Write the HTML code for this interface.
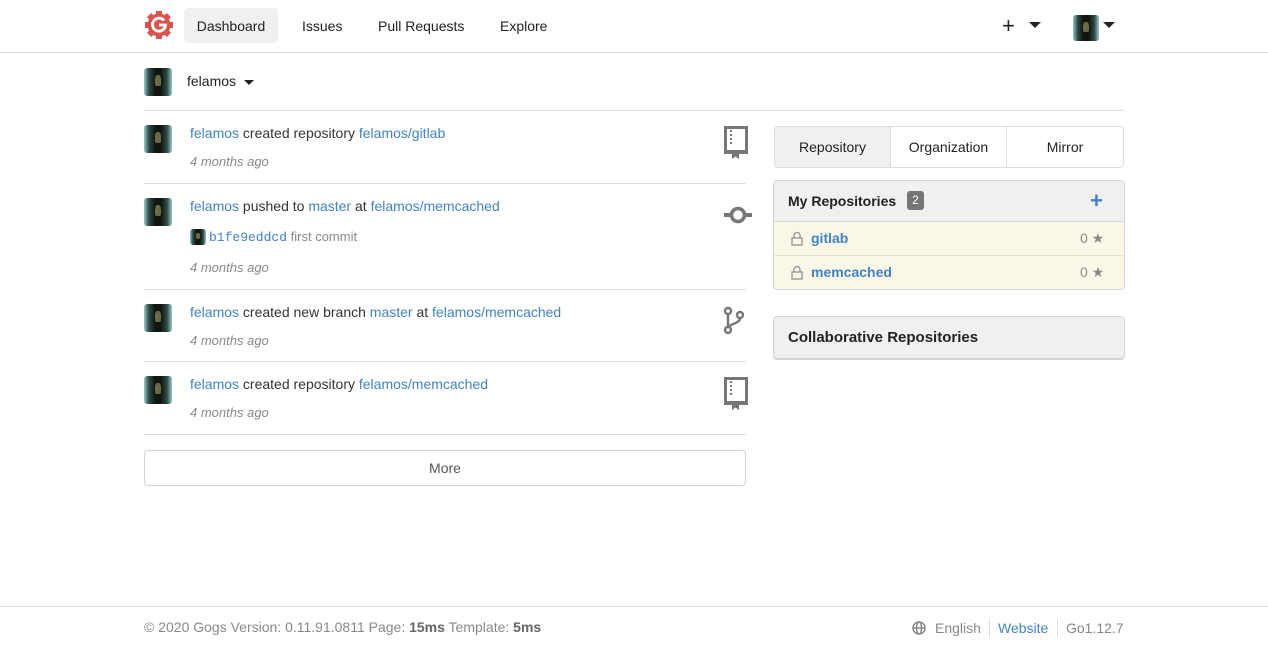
<!DOCTYPE html>
<html><head><meta charset="utf-8"><style>
*{box-sizing:border-box;margin:0;padding:0}
body{width:1268px;height:646px;position:relative;font-family:"Liberation Sans",sans-serif;font-size:14px;color:#333;background:#fff;overflow:hidden}
.a{position:absolute}
a{color:#4183c4;text-decoration:none}
.av{position:absolute;width:28px;height:28px;border-radius:3px;background:linear-gradient(90deg,#9cc8c8 0%,#2e4a46 18%,#10160e 40%,#10160e 60%,#2e4a46 82%,#9cc8c8 100%)}
.av:after{content:"";position:absolute;left:40%;top:25%;width:20%;height:40%;background:#6a6a48;border-radius:40% 40% 2px 2px}
.time{color:#888;font-style:italic;font-size:13px}
.hr{position:absolute;left:144px;width:602px;height:1px;background:#ddd}
.nav{position:absolute;top:9px;height:35px;line-height:35px;font-size:14px;color:#222}
.caret{display:inline-block;width:0;height:0;border-left:5px solid transparent;border-right:5px solid transparent;border-top:5px solid #222;vertical-align:middle}
</style></head><body>
<div class="a" style="left:0;top:52px;width:1268px;height:1px;background:#ddd"></div>
<svg class="a" style="left:144px;top:10px" width="30" height="30" viewBox="0 0 30 30"><g fill="#d9534f"><circle cx="15" cy="15" r="11.5"/><rect x="12" y="1" width="6" height="28"/><rect x="1" y="12" width="28" height="6"/><rect x="12" y="1" width="6" height="28" transform="rotate(45 15 15)"/><rect x="12" y="1" width="6" height="28" transform="rotate(-45 15 15)"/></g><path d="M20 10.5A6.5 6.5 0 1 0 21.5 15H15" fill="none" stroke="#fff" stroke-width="2.8"/></svg>
<div class="nav" style="left:184px;top:8px;width:94px;line-height:37px;background:#f0f0f0;border-radius:4px;text-align:center">Dashboard</div>
<div class="nav" style="left:302px">Issues</div>
<div class="nav" style="left:378px">Pull Requests</div>
<div class="nav" style="left:500px">Explore</div>
<div class="a" style="left:1002px;top:12px;font-size:22px;line-height:28px;color:#222">+</div>
<span class="caret a" style="left:1029px;top:22px;border-width:6px 6px 0 6px"></span>
<div class="av" style="left:1073px;top:15px;width:26px;height:26px"></div>
<span class="caret a" style="left:1103px;top:22px;border-width:6px 6px 0 6px"></span>
<div class="av" style="left:144px;top:68px"></div>
<div class="a" style="left:187px;top:73px;color:#222">felamos <span class="caret" style="margin-left:4px"></span></div>
<div class="hr" style="top:110px;width:980px"></div>

<div class="av" style="left:144px;top:125px"></div>
<div class="a" style="left:190px;top:125px"><a>felamos</a> created repository <a>felamos/gitlab</a></div>
<div class="a time" style="left:190px;top:154px">4 months ago</div>
<svg class="a" style="left:724px;top:126px" width="25" height="33" viewBox="0 0 25 33"><rect x="1.5" y="1.5" width="21" height="25" fill="none" stroke="#767676" stroke-width="3"/><rect x="1" y="24" width="22" height="3" fill="#767676"/><path d="M7 4v15" stroke="#767676" stroke-width="2" stroke-dasharray="2 2"/><path d="M8 26v7l3.5-2.5 3.5 2.5v-7z" fill="#767676"/></svg>
<div class="hr" style="top:183px"></div>

<div class="av" style="left:144px;top:198px"></div>
<div class="a" style="left:190px;top:198px"><a>felamos</a> pushed to <a>master</a> at <a>felamos/memcached</a></div>
<div class="av" style="left:190px;top:229px;width:16px;height:16px"></div>
<div class="a" style="left:209px;top:229px;font-size:13px"><a style="font-family:'Liberation Mono',monospace">b1fe9eddcd</a> <span style="color:#888">first commit</span></div>
<div class="a time" style="left:190px;top:260px">4 months ago</div>
<svg class="a" style="left:723px;top:204px" width="30" height="22" viewBox="0 0 30 22"><path d="M1 11h7M22 11h7" stroke="#767676" stroke-width="4"/><circle cx="15" cy="11" r="6.5" fill="none" stroke="#767676" stroke-width="3.5"/></svg>
<div class="hr" style="top:289px"></div>

<div class="av" style="left:144px;top:304px"></div>
<div class="a" style="left:190px;top:304px"><a>felamos</a> created new branch <a>master</a> at <a>felamos/memcached</a></div>
<div class="a time" style="left:190px;top:333px">4 months ago</div>
<svg class="a" style="left:722px;top:306px" width="24" height="30" viewBox="0 0 24 30"><g fill="none" stroke="#767676" stroke-width="2.4"><circle cx="6" cy="5" r="3"/><circle cx="6" cy="24" r="3"/><circle cx="18" cy="9" r="3"/><path d="M6 8v13M18 12c0 6-10 5-12 10"/></g></svg>
<div class="hr" style="top:361px"></div>

<div class="av" style="left:144px;top:376px"></div>
<div class="a" style="left:190px;top:376px"><a>felamos</a> created repository <a>felamos/memcached</a></div>
<div class="a time" style="left:190px;top:405px">4 months ago</div>
<svg class="a" style="left:724px;top:377px" width="25" height="33" viewBox="0 0 25 33"><rect x="1.5" y="1.5" width="21" height="25" fill="none" stroke="#767676" stroke-width="3"/><rect x="1" y="24" width="22" height="3" fill="#767676"/><path d="M7 4v15" stroke="#767676" stroke-width="2" stroke-dasharray="2 2"/><path d="M8 26v7l3.5-2.5 3.5 2.5v-7z" fill="#767676"/></svg>
<div class="hr" style="top:434px"></div>

<div class="a" style="left:144px;top:450px;width:602px;height:36px;border:1px solid #d4d4d5;border-radius:4px;text-align:center;line-height:34px;color:#555">More</div>

<div class="a" style="left:774px;top:126px;width:350px;height:42px;border:1px solid #ddd;border-radius:4px;display:flex;overflow:hidden">
<div style="width:116px;background:#f0f0f0;text-align:center;line-height:40px;border-right:1px solid #ddd;color:#222">Repository</div>
<div style="width:116px;text-align:center;line-height:40px;border-right:1px solid #ddd;color:#222">Organization</div>
<div style="flex:1;text-align:center;line-height:40px;color:#222">Mirror</div></div>

<div class="a" style="left:773px;top:180px;width:352px;height:110px;border:1px solid #d4d4d5;border-radius:4px;overflow:hidden">
<div style="height:41px;background:#f0f0f0;border-bottom:1px solid #d4d4d5;position:relative">
<span class="a" style="left:14px;top:12px;font-weight:bold;color:#222;font-size:14px">My Repositories</span>
<span class="a" style="left:133px;top:10px;width:17px;height:19px;background:#767676;color:#fff;border-radius:3px;font-size:12px;text-align:center;line-height:19px">2</span>
<span class="a" style="left:316px;top:7px;color:#4183c4;font-size:22px;font-weight:bold">+</span></div>
<div style="height:34px;background:#fbf7e8;border-bottom:1px solid #e6e3d6;position:relative">
<svg class="a" style="left:17px;top:9px" width="12" height="15" viewBox="0 0 12 15"><path d="M3 7V4.5a3 3 0 0 1 6 0V7" fill="none" stroke="#999" stroke-width="1.4"/><rect x="1" y="7" width="10" height="7" fill="none" stroke="#999" stroke-width="1.4"/></svg>
<a class="a" style="left:37px;top:8px;font-weight:bold">gitlab</a>
<span class="a" style="left:306px;top:8px;color:#888">0 ★</span></div>
<div style="height:34px;background:#fbf7e8;position:relative">
<svg class="a" style="left:17px;top:9px" width="12" height="15" viewBox="0 0 12 15"><path d="M3 7V4.5a3 3 0 0 1 6 0V7" fill="none" stroke="#999" stroke-width="1.4"/><rect x="1" y="7" width="10" height="7" fill="none" stroke="#999" stroke-width="1.4"/></svg>
<a class="a" style="left:37px;top:8px;font-weight:bold">memcached</a>
<span class="a" style="left:306px;top:8px;color:#888">0 ★</span></div></div>

<div class="a" style="left:773px;top:316px;width:352px;height:44px;border:1px solid #d4d4d5;border-bottom:2px solid #d4d4d5;border-radius:4px;background:#f0f0f0">
<span class="a" style="left:14px;top:12px;font-weight:bold;color:#222;font-size:15px">Collaborative Repositories</span></div>

<div class="a" style="left:0;top:606px;width:1268px;height:1px;background:#ddd"></div>
<div class="a" style="left:144px;top:619px;color:#888">© 2020 Gogs Version: 0.11.91.0811 Page: <b style="color:#666">15ms</b> Template: <b style="color:#666">5ms</b></div>
<svg class="a" style="left:912px;top:621px" width="14" height="14" viewBox="0 0 14 14"><g fill="none" stroke="#888" stroke-width="1.5"><circle cx="7" cy="7" r="6"/><ellipse cx="7" cy="7" rx="2.5" ry="6"/><path d="M1 7h12"/></g></svg>
<div class="a" style="left:935px;top:620px;color:#888">English</div>
<div class="a" style="left:989px;top:619px;width:1px;height:18px;background:#ddd"></div>
<a class="a" style="left:998px;top:620px">Website</a>
<div class="a" style="left:1057px;top:619px;width:1px;height:18px;background:#ddd"></div>
<div class="a" style="left:1066px;top:620px;color:#888">Go1.12.7</div>
</body></html>
